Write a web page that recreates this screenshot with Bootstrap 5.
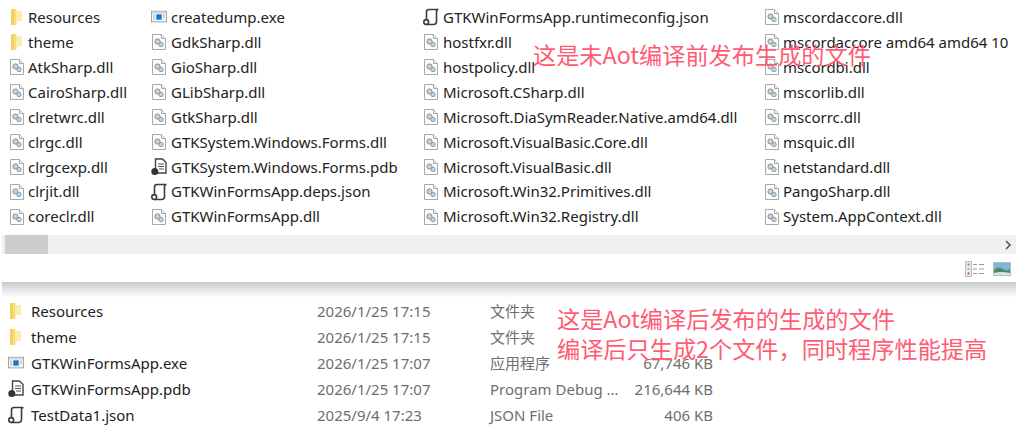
<!DOCTYPE html>
<html lang="zh-CN"><head><meta charset="utf-8"><title>Files</title>
<link href="https://cdn.jsdelivr.net/npm/bootstrap@5.3.0/dist/css/bootstrap.min.css" rel="stylesheet">
<style>
html,body{margin:0;background:#fff;overflow:hidden}
body{width:1024px;height:437px;font-family:"Noto Sans","Noto Sans CJK SC",sans-serif;font-size:15px;color:#222;position:relative}
.fview{width:1016px;height:235px;padding-top:5px;overflow:hidden}
.fcol{flex:none;overflow:hidden}
.c1{width:151px;padding-left:9px}.c2{width:272px}.c3{width:341px}.c4{width:252px}
.fitem{height:24.9px;white-space:nowrap}
.fitem svg{width:16px;height:18px;flex:none;margin-right:3px}
.c2 .fitem svg,.c3 .fitem svg{margin-right:4px}
.sbar{width:1014px;margin-left:2px;height:19px;background:#f0f0f0;padding-left:3px}
.sthumb{width:43px;height:19px;background:#cdcdcd}
.tbar{width:1014px;margin-left:2px;height:28px;padding-right:5px;padding-top:1px;gap:8px}
.shadowband{width:1014px;margin-left:2px;height:16px;background:linear-gradient(#c9c9c9,#f2f2f2 70%,#fff)}
.drow{height:26px;white-space:nowrap;color:#222}
.dname{width:317px;padding-left:8px;flex:none}
.dname svg{width:16px;height:18px;margin-right:7px;flex:none}
.ddate{width:173px;flex:none}
.dtype{width:130px;flex:none}
.dsize{width:93px;flex:none;text-align:right}
.ddate,.dtype,.dsize{color:#6e6e6e}
.note{position:absolute;color:#ff5c74;font-family:"Noto Sans CJK SC",sans-serif;font-size:23.2px;line-height:30px;white-space:nowrap}
.n1{left:533px;top:39px}.n2{left:557px;top:303px}
</style></head><body>
<svg width="0" height="0" class="position-absolute">
<defs>
<symbol id="fo" viewBox="0 0 16 18"><path d="M2 1h5l1 2h5v10H8.500L7 17H2z" fill="#fbdc7c"/><path d="M7 17V1l1 2h5v10H8.500z" fill="#fcebae"/><path d="M2 1h3v16H2z" fill="#f7cf5e"/></symbol>
<symbol id="dl" viewBox="0 0 16 18"><path d="M1.500 1.500h9l4 4v11h-13z" fill="#fdfdfd" stroke="#a8a8a8"/><path d="M10.500 1.500v4h4" fill="#eee" stroke="#a8a8a8"/><circle cx="6.500" cy="8.500" r="2.600" fill="#d0d0d0" stroke="#8c8c8c"/><circle cx="10" cy="11.500" r="2.200" fill="#bcd6ea" stroke="#7ea0b8"/></symbol>
<symbol id="ex" viewBox="0 0 18 16"><rect x=".5" y="1.500" width="17" height="12" fill="#f3f3f3" stroke="#9a9a9a"/><rect x="1" y="2" width="16" height="2" fill="#d4d4d4"/><rect x="6" y="5" width="6" height="6" fill="#0f78d4"/><path d="M2.500 6h2M2.500 8h2M2.500 10h2M13.500 6h2M13.500 8h2" stroke="#a9a9a9"/></symbol>
<symbol id="pd" viewBox="0 0 16 18"><path d="M4.500 1h7l3.500 3.500v10.500H4.500z" fill="#fff" stroke="#444" stroke-width="1.400"/><path d="M7 6h6M7 8.500h6M8 11h5" stroke="#555"/><circle cx="3.800" cy="13.500" r="3.500" fill="#333"/></symbol>
<symbol id="js" viewBox="0 0 16 18"><path d="M3.500 12V4q0-2.500 2.500-2.500h9.500q-2 0-2 2.500v9.500q0 3-3 3H3" fill="#fff" stroke="#3c3c3c" stroke-width="1.600"/><circle cx="3.200" cy="14" r="2.400" fill="#fff" stroke="#3c3c3c" stroke-width="1.600"/></symbol>
<symbol id="vl" viewBox="0 0 20 16"><rect x=".5" y=".5" width="6" height="15" fill="#eee" stroke="#bbb"/><rect x="2.500" y="2.500" width="2" height="2" fill="#4a90d0"/><rect x="2.500" y="7" width="2" height="2" fill="#e0b030"/><rect x="2.500" y="11.500" width="2" height="2" fill="#d04a3a"/><path d="M8 3.500h4M14 3.500h5M8 8h4M14 8h5M8 12.500h4M14 12.500h5" stroke="#999"/></symbol>
<symbol id="vp" viewBox="0 0 18 14"><rect x=".5" y=".5" width="17" height="13" fill="#7fb4dc" stroke="#bbb"/><path d="M1 8q5-4 9-1t7 0v6H1z" fill="#4e8a68"/><path d="M1 11q7-2 16 0v2H1z" fill="#d8e4ec"/></symbol>
</defs></svg>

<div class="fview d-flex">
<div class="fcol c1">
<div class="fitem d-flex align-items-center"><svg><use href="#fo"/></svg>Resources</div>
<div class="fitem d-flex align-items-center"><svg><use href="#fo"/></svg>theme</div>
<div class="fitem d-flex align-items-center"><svg><use href="#dl"/></svg>AtkSharp.dll</div>
<div class="fitem d-flex align-items-center"><svg><use href="#dl"/></svg>CairoSharp.dll</div>
<div class="fitem d-flex align-items-center"><svg><use href="#dl"/></svg>clretwrc.dll</div>
<div class="fitem d-flex align-items-center"><svg><use href="#dl"/></svg>clrgc.dll</div>
<div class="fitem d-flex align-items-center"><svg><use href="#dl"/></svg>clrgcexp.dll</div>
<div class="fitem d-flex align-items-center"><svg><use href="#dl"/></svg>clrjit.dll</div>
<div class="fitem d-flex align-items-center"><svg><use href="#dl"/></svg>coreclr.dll</div>
</div>
<div class="fcol c2">
<div class="fitem d-flex align-items-center"><svg><use href="#ex"/></svg>createdump.exe</div>
<div class="fitem d-flex align-items-center"><svg><use href="#dl"/></svg>GdkSharp.dll</div>
<div class="fitem d-flex align-items-center"><svg><use href="#dl"/></svg>GioSharp.dll</div>
<div class="fitem d-flex align-items-center"><svg><use href="#dl"/></svg>GLibSharp.dll</div>
<div class="fitem d-flex align-items-center"><svg><use href="#dl"/></svg>GtkSharp.dll</div>
<div class="fitem d-flex align-items-center"><svg><use href="#dl"/></svg>GTKSystem.Windows.Forms.dll</div>
<div class="fitem d-flex align-items-center"><svg><use href="#pd"/></svg>GTKSystem.Windows.Forms.pdb</div>
<div class="fitem d-flex align-items-center"><svg><use href="#js"/></svg>GTKWinFormsApp.deps.json</div>
<div class="fitem d-flex align-items-center"><svg><use href="#dl"/></svg>GTKWinFormsApp.dll</div>
</div>
<div class="fcol c3">
<div class="fitem d-flex align-items-center"><svg><use href="#js"/></svg>GTKWinFormsApp.runtimeconfig.json</div>
<div class="fitem d-flex align-items-center"><svg><use href="#dl"/></svg>hostfxr.dll</div>
<div class="fitem d-flex align-items-center"><svg><use href="#dl"/></svg>hostpolicy.dll</div>
<div class="fitem d-flex align-items-center"><svg><use href="#dl"/></svg>Microsoft.CSharp.dll</div>
<div class="fitem d-flex align-items-center"><svg><use href="#dl"/></svg>Microsoft.DiaSymReader.Native.amd64.dll</div>
<div class="fitem d-flex align-items-center"><svg><use href="#dl"/></svg>Microsoft.VisualBasic.Core.dll</div>
<div class="fitem d-flex align-items-center"><svg><use href="#dl"/></svg>Microsoft.VisualBasic.dll</div>
<div class="fitem d-flex align-items-center"><svg><use href="#dl"/></svg>Microsoft.Win32.Primitives.dll</div>
<div class="fitem d-flex align-items-center"><svg><use href="#dl"/></svg>Microsoft.Win32.Registry.dll</div>
</div>
<div class="fcol c4">
<div class="fitem d-flex align-items-center"><svg><use href="#dl"/></svg>mscordaccore.dll</div>
<div class="fitem d-flex align-items-center"><svg><use href="#dl"/></svg>mscordaccore amd64 amd64 10</div>
<div class="fitem d-flex align-items-center"><svg><use href="#dl"/></svg>mscordbi.dll</div>
<div class="fitem d-flex align-items-center"><svg><use href="#dl"/></svg>mscorlib.dll</div>
<div class="fitem d-flex align-items-center"><svg><use href="#dl"/></svg>mscorrc.dll</div>
<div class="fitem d-flex align-items-center"><svg><use href="#dl"/></svg>msquic.dll</div>
<div class="fitem d-flex align-items-center"><svg><use href="#dl"/></svg>netstandard.dll</div>
<div class="fitem d-flex align-items-center"><svg><use href="#dl"/></svg>PangoSharp.dll</div>
<div class="fitem d-flex align-items-center"><svg><use href="#dl"/></svg>System.AppContext.dll</div>
</div>
</div>

<div class="sbar d-flex justify-content-between align-items-center">
<div class="sthumb"></div>
<svg width="8" height="10" class="me-1" viewBox="0 0 8 10"><path d="M2 1l4 4-4 4" fill="none" stroke="#555" stroke-width="1.600"/></svg>
</div>
<div class="tbar d-flex justify-content-end align-items-center">
<svg width="20" height="16"><use href="#vl"/></svg>
<svg width="18" height="14"><use href="#vp"/></svg>
</div>
<div class="shadowband"></div>

<div class="dlist">
<div class="drow d-flex align-items-center"><div class="dname d-flex align-items-center"><svg><use href="#fo"/></svg>Resources</div><div class="ddate">2026/1/25 17:15</div><div class="dtype">文件夹</div></div>
<div class="drow d-flex align-items-center"><div class="dname d-flex align-items-center"><svg><use href="#fo"/></svg>theme</div><div class="ddate">2026/1/25 17:15</div><div class="dtype">文件夹</div></div>
<div class="drow d-flex align-items-center"><div class="dname d-flex align-items-center"><svg><use href="#ex"/></svg>GTKWinFormsApp.exe</div><div class="ddate">2026/1/25 17:07</div><div class="dtype">应用程序</div><div class="dsize">67,746 KB</div></div>
<div class="drow d-flex align-items-center"><div class="dname d-flex align-items-center"><svg><use href="#pd"/></svg>GTKWinFormsApp.pdb</div><div class="ddate">2026/1/25 17:07</div><div class="dtype">Program Debug ...</div><div class="dsize">216,644 KB</div></div>
<div class="drow d-flex align-items-center"><div class="dname d-flex align-items-center"><svg><use href="#js"/></svg>TestData1.json</div><div class="ddate">2025/9/4 17:23</div><div class="dtype">JSON File</div><div class="dsize">406 KB</div></div>
</div>

<div class="note n1">这是未Aot编译前发布生成的文件</div>
<div class="note n2">这是Aot编译后发布的生成的文件<br>编译后只生成2个文件，同时程序性能提高</div>
<script src="https://cdn.jsdelivr.net/npm/bootstrap@5.3.0/dist/js/bootstrap.bundle.min.js"></script>
</body></html>
